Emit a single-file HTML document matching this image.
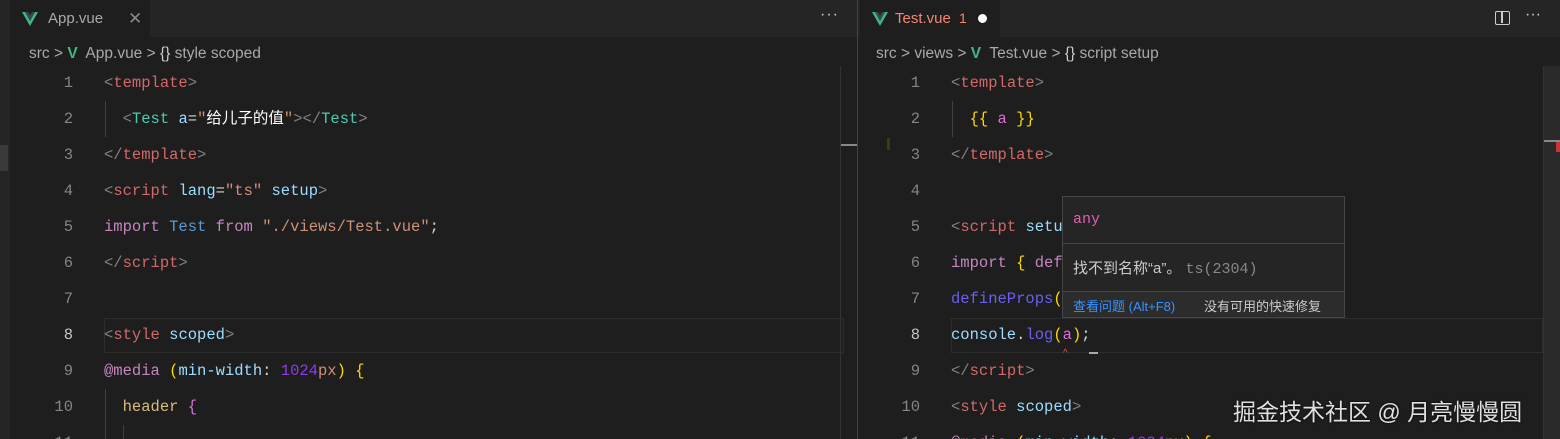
<!DOCTYPE html>
<html style="overflow:hidden;height:439px"><head><meta charset="utf-8"><style>
*{margin:0;padding:0;box-sizing:border-box}
body{width:1560px;height:439px;background:#1e1e1e;overflow:hidden;position:relative;font-family:"Liberation Sans","Noto Sans CJK SC",sans-serif;color:#ccc}
.abs{position:absolute}
.tabbar{top:0;height:37px;background:#252526}
.tab{top:0;height:37px;background:#1e1e1e;font-size:15px;line-height:37px}
.bc{font-size:15.5px;color:#a9a9a9;top:44px;line-height:20px;white-space:nowrap}
.code{font-family:"Liberation Mono","Noto Sans CJK SC",monospace;font-size:15.5px;white-space:pre;line-height:36px}
.ln{color:#858585;text-align:right;width:40px}
.t{color:#808080}.tg{color:#d16969}.tc{color:#4ec9b0}.at{color:#9cdcfe}.s{color:#ce9178}.k{color:#c586c0}.b{color:#569cd6}.w{color:#d4d4d4}.y{color:#ffd700}.p{color:#da70d6}.f{color:#dcdcaa}.n{color:#b5cea8}
.guide{width:1px;background:#404040}
</style></head><body>
<div class="abs tabbar" style="left:0;width:1560px"></div>
<div class="abs" style="left:0;top:0;width:10px;height:439px;background:#252526"></div>
<div class="abs" style="left:0;top:145px;width:8px;height:26px;background:#3a3a3a"></div>
<div class="abs tab" style="left:10px;width:140px">
<svg class="abs" style="left:12px;top:12px" width="16" height="14" viewBox="0 0 16 14"><path d="M0 0h3l5 9 5-9h3L8 14z" fill="#41b883"/><path d="M3 0h3l2 3.5L10 0h3L8 8.5z" fill="#35495e"/></svg>
<span class="abs" style="left:38px;color:#a9a9a9">App.vue</span>
<span class="abs" style="left:118px;color:#888;font-size:17px">✕</span>
</div>
<div class="abs" style="left:820px;top:6px;color:#ccc;font-size:16px;letter-spacing:1px">···</div>
<div class="abs tab" style="left:860px;width:140px">
<svg class="abs" style="left:12px;top:12px" width="16" height="14" viewBox="0 0 16 14"><path d="M0 0h3l5 9 5-9h3L8 14z" fill="#41b883"/><path d="M3 0h3l2 3.5L10 0h3L8 8.5z" fill="#35495e"/></svg>
<span class="abs" style="left:35px;color:#f48771">Test.vue</span>
<span class="abs" style="left:99px;color:#f48771;font-size:14px">1</span>
<span class="abs" style="left:118px;top:14px;width:9px;height:9px;border-radius:50%;background:#fff"></span>
</div>
<div class="abs" style="left:1495px;top:11px;width:15px;height:14px;border:1.5px solid #ccc;border-radius:2px"><div class="abs" style="left:5px;top:0;width:1.5px;height:11px;background:#ccc"></div></div>
<div class="abs" style="left:1525px;top:6px;color:#ccc;font-size:16px">···</div>
<div class="abs" style="left:857px;top:0;width:1px;height:439px;background:#444"></div>
<div class="abs bc" style="left:29px">src &gt; <span style="color:#41b883;font-weight:bold">V</span>&nbsp; App.vue &gt; <span style="color:#ccc">{}</span> style scoped</div>
<div class="abs bc" style="left:876px">src &gt; views &gt; <span style="color:#41b883;font-weight:bold">V</span>&nbsp; Test.vue &gt; <span style="color:#ccc">{}</span> script setup</div>
<div class="abs" style="left:840px;top:66px;width:17px;height:373px;border-left:1px solid #333"></div>
<div class="abs" style="left:841px;top:144px;width:16px;height:2px;background:#888"></div>
<div class="abs" style="left:1543px;top:66px;width:17px;height:373px;background:#2a2a2a;border-left:1px solid #333"></div>
<div class="abs" style="left:1544px;top:140px;width:16px;height:2px;background:#888"></div>
<div class="abs" style="left:1556px;top:142px;width:4px;height:10px;background:#c33"></div>
<div class="abs" style="left:104px;top:318px;width:740px;height:35px;border:1px solid #2d2d2d"></div>
<div class="abs" style="left:951px;top:318px;width:592px;height:35px;border:1px solid #2d2d2d"></div>
<div class="abs code" style="left:33px;top:65px"><div class="ln">1</div><div class="ln">2</div><div class="ln">3</div><div class="ln">4</div><div class="ln">5</div><div class="ln">6</div><div class="ln">7</div><div class="ln" style="color:#c6c6c6">8</div><div class="ln">9</div><div class="ln">10</div><div class="ln">11</div></div>
<div class="abs guide" style="left:105px;top:101px;height:36px"></div>
<div class="abs guide" style="left:105px;top:389px;height:50px"></div>
<div class="abs guide" style="left:123px;top:425px;height:14px"></div>
<div class="abs code" style="left:104px;top:65px"><div><span class="t">&lt;</span><span class="tg">template</span><span class="t">&gt;</span></div><div>  <span class="t">&lt;</span><span class="tc">Test</span> <span class="at">a</span><span class="w">=</span><span class="s">"</span><span style="color:#fff">给儿子的值</span><span class="s">"</span><span class="t">&gt;&lt;/</span><span class="tc">Test</span><span class="t">&gt;</span></div><div><span class="t">&lt;/</span><span class="tg">template</span><span class="t">&gt;</span></div><div><span class="t">&lt;</span><span class="tg">script</span> <span class="at">lang</span><span class="w">=</span><span class="s">"ts"</span> <span class="at">setup</span><span class="t">&gt;</span></div><div><span class="k">import</span> <span class="b">Test</span> <span class="k">from</span> <span class="s">"./views/Test.vue"</span><span class="w">;</span></div><div><span class="t">&lt;/</span><span class="tg">script</span><span class="t">&gt;</span></div><div> </div><div><span class="t">&lt;</span><span class="tg">style</span> <span class="at">scoped</span><span class="t">&gt;</span></div><div><span class="k">@media</span> <span class="y">(</span><span class="at">min-width</span><span class="w">: </span><span style="color:#8a3ee0">1024</span><span class="s">px</span><span class="y">)</span> <span class="y">{</span></div><div>  <span style="color:#d7ba7d">header</span> <span class="p">{</span></div></div>
<div class="abs code" style="left:880px;top:65px"><div class="ln">1</div><div class="ln">2</div><div class="ln">3</div><div class="ln">4</div><div class="ln">5</div><div class="ln">6</div><div class="ln">7</div><div class="ln" style="color:#c6c6c6">8</div><div class="ln">9</div><div class="ln">10</div><div class="ln">11</div></div>
<div class="abs guide" style="left:952px;top:101px;height:36px"></div>
<div class="abs" style="left:887px;top:138px;width:3px;height:12px;background:#3a3a1a"></div>
<div class="abs code" style="left:951px;top:65px"><div><span class="t">&lt;</span><span class="tg">template</span><span class="t">&gt;</span></div><div>  <span class="y">{{</span> <span class="p">a</span> <span class="y">}}</span></div><div><span class="t">&lt;/</span><span class="tg">template</span><span class="t">&gt;</span></div><div> </div><div><span class="t">&lt;</span><span class="tg">script</span> <span class="at">setup</span></div><div><span class="k">import</span> <span class="y">{</span> <span class="k">def</span></div><div><span style="color:#6a5ff0">defineProps</span><span class="y">(</span></div><div><span class="at">console</span><span class="w">.</span><span style="color:#6a5ff0">log</span><span class="y">(</span><span class="p">a</span><span class="y">)</span><span class="w">;</span></div><div><span class="t">&lt;/</span><span class="tg">script</span><span class="t">&gt;</span></div><div><span class="t">&lt;</span><span class="tg">style</span> <span class="at">scoped</span><span class="t">&gt;</span></div><div><span class="k">@media</span> <span class="y">(</span><span class="at">min-width</span><span class="w">: </span><span style="color:#8a3ee0">1024</span><span class="s">px</span><span class="y">) {</span></div></div>
<div class="abs" style="left:1063px;top:348px;color:#f14c4c;font-size:10px">^</div>
<div class="abs" style="left:1089px;top:352px;width:9px;height:2px;background:#aaa"></div>
<div class="abs" style="left:1062px;top:196px;width:283px;height:122px;background:#252526;border:1px solid #454545;font-size:14px">
<div class="abs" style="left:10px;top:14px;color:#e05fb2;font-family:'Liberation Mono',monospace;font-size:15px">any</div>
<div class="abs" style="left:0;top:46px;width:281px;height:1px;background:#454545"></div>
<div class="abs" style="left:10px;top:60px;color:#ccc;font-size:15px;white-space:nowrap">找不到名称“a”。 <span style="color:#888;font-family:'Liberation Mono',monospace">ts(2304)</span></div>
<div class="abs" style="left:0;top:94px;width:281px;height:26px;background:#2c2c2d;border-top:1px solid #454545"></div>
<div class="abs" style="left:10px;top:99px;color:#3794ff;font-size:13px;white-space:nowrap">查看问题 (Alt+F8)</div>
<div class="abs" style="left:141px;top:99px;color:#ccc;font-size:13px;white-space:nowrap">没有可用的快速修复</div>
</div>
<div class="abs" style="left:1233px;top:393px;color:#e0e0e0;font-size:23px;white-space:nowrap;text-shadow:0 0 2px #000">掘金技术社区 @ 月亮慢慢圆</div>
</body></html>
